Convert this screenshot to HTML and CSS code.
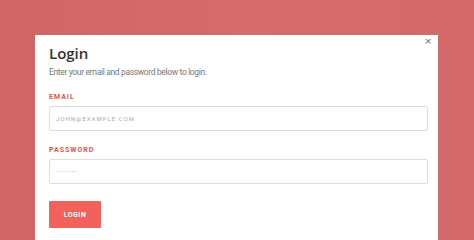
FILE: index.html
```html
<!DOCTYPE html>
<html>
<head>
<meta charset="utf-8">
<link rel="stylesheet" href="styles.css">
</head>
<body>
<div class="modal">
  <button class="close" aria-label="Close">&times;</button>
  <h1 class="title">Login</h1>
  <p class="subtitle">Enter your email and password below to login.</p>
  <form class="form">
    <label class="label">Email</label>
    <input class="input" type="text" placeholder="JOHN@EXAMPLE.COM">
    <label class="label label-pw">Password</label>
    <input class="input input-pw" type="text" value="········">
    <button class="btn" type="button">Login</button>
  </form>
</div>
</body>
</html>
```
FILE: styles.css
```css
html, body { margin: 0; padding: 0; }
body {
  width: 474px;
  height: 240px;
  overflow: hidden;
  background: linear-gradient(90deg, #cf6565 0%, #d56b6b 50%, #d46a6a 100%);
  font-family: "Roboto", "Open Sans", sans-serif;
}
.modal {
  position: relative;
  margin: 35px 0 0 35px;
  width: 403px;
  height: 205px;
  background: #fff;
  box-sizing: border-box;
  padding: 10px 10px 0 14px;
}
.close {
  position: absolute;
  top: 2px;
  right: 6px;
  border: 0;
  background: none;
  padding: 0;
  font-size: 9px;
  line-height: 9px;
  color: #666;
  font-family: "DejaVu Sans", sans-serif;
}
.title {
  margin: 0;
  font-family: "Open Sans", sans-serif;
  font-size: 15px;
  font-weight: 600;
  color: #333;
  line-height: 16px;
}
.subtitle {
  margin: 6px 0 0 0;
  font-size: 8.5px;
  line-height: 10px;
  letter-spacing: -0.35px;
  color: #777;
}
.form {
  display: flex;
  flex-direction: column;
  align-items: flex-start;
  margin-top: 16px;
}
.label {
  font-size: 7px;
  line-height: 8px;
  font-weight: 700;
  letter-spacing: 1px;
  text-transform: uppercase;
  color: #e0524d;
}
.input {
  box-sizing: border-box;
  margin-top: 5px;
  width: 379px;
  height: 25px;
  border: 1px solid #ddd;
  border-radius: 2px;
  padding: 0 6px;
  font-family: inherit;
  font-size: 6px;
  letter-spacing: 1px;
  color: #aaa;
  outline: none;
}
.input::placeholder { color: #aaa; }
.input-pw { color: #999; font-size: 8px; letter-spacing: 0.5px; }
.label-pw { margin-top: 15px; }
.btn {
  margin-top: 17px;
  width: 52px;
  height: 27px;
  border: 0;
  border-radius: 1px;
  background: #f2615c;
  color: #fff;
  font-family: inherit;
  font-size: 7px;
  font-weight: 700;
  letter-spacing: 0.5px;
  text-transform: uppercase;
  padding: 0;
}
```
